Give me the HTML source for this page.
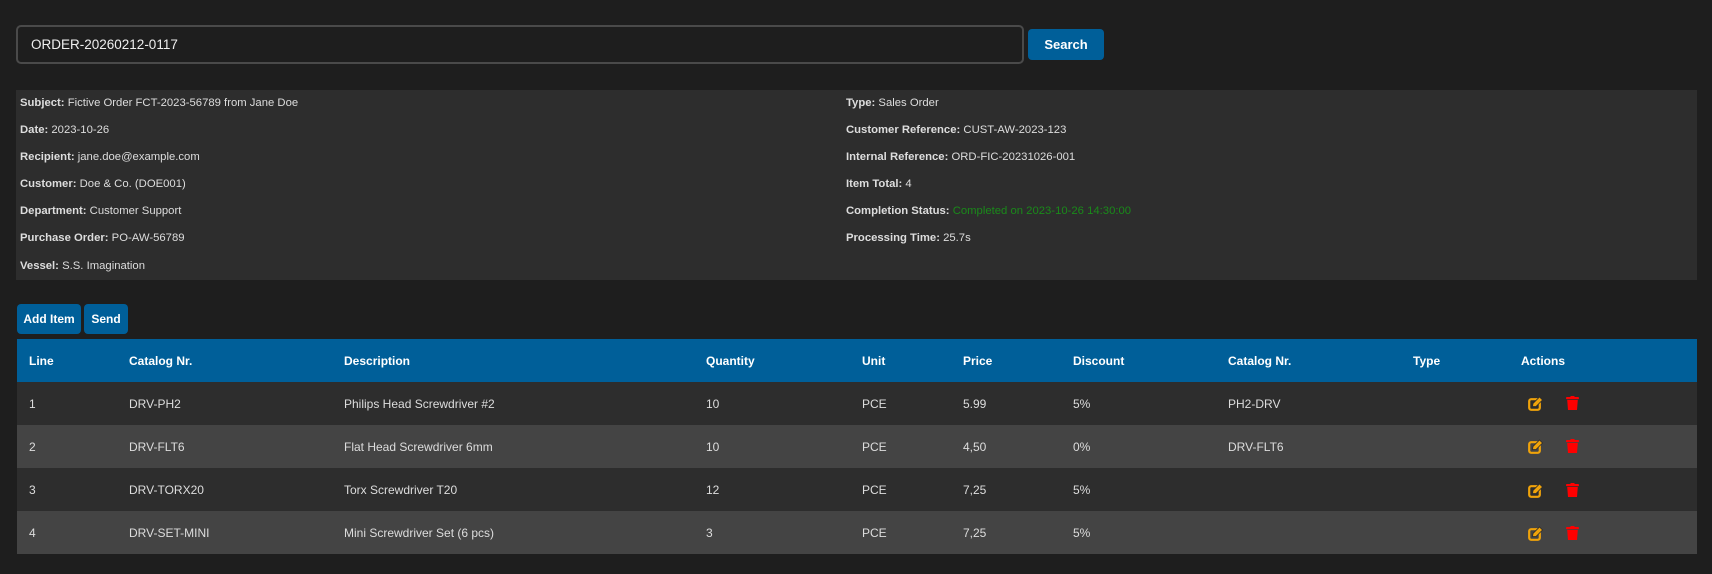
<!DOCTYPE html>
<html><head><meta charset="utf-8"><style>
*{box-sizing:border-box;margin:0;padding:0}
body{width:1712px;height:574px;background:#1e1e1e;font-family:"Liberation Sans",sans-serif;font-size:12px;color:#ddd;position:relative;overflow:hidden}
.abs{position:absolute}
.inp{left:16px;top:25px;width:1008px;height:39px;border:2px solid #4a4a4a;border-radius:5px;background:#1e1e1e;color:#eee;font-size:13.5px;padding:10px 0 0 13px}
.btn{background:#005f99;color:#fff;font-weight:bold;border-radius:4px;text-align:center}
.panel{left:16px;top:90px;width:1681px;height:190px;background:#2d2d2d}
.f{position:absolute;white-space:nowrap;font-size:11.3px;color:#ddd}
.f b{color:#ddd}
table{position:absolute;left:17px;top:339px;width:1680px;border-collapse:collapse;table-layout:fixed}
th{background:#005f99;color:#fff;height:43px;text-align:left;font-size:12px;font-weight:bold;padding:0}
td{height:43px;padding:0;font-size:12px;color:#ddd}
tr.a td{background:#2d2d2d}
tr.b td{background:#444}
</style></head><body>
<div class="abs inp">ORDER-20260212-0117</div>
<div class="abs btn" style="left:1028px;top:29px;width:76px;height:31px;line-height:31px;font-size:13px">Search</div>
<div class="abs panel">
<div class="f" style="left:4px;top:7px"><b>Subject:</b> Fictive Order FCT-2023-56789 from Jane Doe</div>
<div class="f" style="left:4px;top:34px"><b>Date:</b> 2023-10-26</div>
<div class="f" style="left:4px;top:61px"><b>Recipient:</b> jane.doe@example.com</div>
<div class="f" style="left:4px;top:88px"><b>Customer:</b> Doe &amp; Co. (DOE001)</div>
<div class="f" style="left:4px;top:115px"><b>Department:</b> Customer Support</div>
<div class="f" style="left:4px;top:142px"><b>Purchase Order:</b> PO-AW-56789</div>
<div class="f" style="left:4px;top:170px"><b>Vessel:</b> S.S. Imagination</div>
<div class="f" style="left:830px;top:7px"><b>Type:</b> Sales Order</div>
<div class="f" style="left:830px;top:34px"><b>Customer Reference:</b> CUST-AW-2023-123</div>
<div class="f" style="left:830px;top:61px"><b>Internal Reference:</b> ORD-FIC-20231026-001</div>
<div class="f" style="left:830px;top:88px"><b>Item Total:</b> 4</div>
<div class="f" style="left:830px;top:115px"><b>Completion Status:</b> <span style="color:#1a8a1a">Completed on 2023-10-26 14:30:00</span></div>
<div class="f" style="left:830px;top:142px"><b>Processing Time:</b> 25.7s</div>
</div>
<div class="abs btn" style="left:17px;top:304px;width:64px;height:30px;line-height:30px;font-size:12px">Add Item</div>
<div class="abs btn" style="left:84px;top:304px;width:44px;height:30px;line-height:30px;font-size:12px">Send</div>
<table>
<colgroup><col style="width:112px"><col style="width:215px"><col style="width:362px"><col style="width:156px"><col style="width:101px"><col style="width:110px"><col style="width:155px"><col style="width:185px"><col style="width:108px"><col></colgroup>
<tr><th style="padding-left:12px">Line</th><th>Catalog Nr.</th><th>Description</th><th>Quantity</th><th>Unit</th><th>Price</th><th>Discount</th><th>Catalog Nr.</th><th>Type</th><th>Actions</th></tr>
<tr class="a"><td style="padding-left:12px">1</td><td>DRV-PH2</td><td>Philips Head Screwdriver #2</td><td>10</td><td>PCE</td><td>5.99</td><td>5%</td><td>PH2-DRV</td><td></td><td></td></tr>
<tr class="b"><td style="padding-left:12px">2</td><td>DRV-FLT6</td><td>Flat Head Screwdriver 6mm</td><td>10</td><td>PCE</td><td>4,50</td><td>0%</td><td>DRV-FLT6</td><td></td><td></td></tr>
<tr class="a"><td style="padding-left:12px">3</td><td>DRV-TORX20</td><td>Torx Screwdriver T20</td><td>12</td><td>PCE</td><td>7,25</td><td>5%</td><td></td><td></td><td></td></tr>
<tr class="b"><td style="padding-left:12px">4</td><td>DRV-SET-MINI</td><td>Mini Screwdriver Set (6 pcs)</td><td>3</td><td>PCE</td><td>7,25</td><td>5%</td><td></td><td></td><td></td></tr>
</table>
<svg class="abs" style="left:0;top:0" width="1712" height="574">
<defs>
<g id="ed"><rect x="1.2" y="3.2" width="10.6" height="10.6" rx="2" fill="none" stroke="#f0a30a" stroke-width="2.2"/><path d="M4.5 10.5 L5 7.5 L11.5 1 L14.5 4 L8 10.5 Z" fill="#f0a30a" stroke="#2d2d2d" stroke-width="0.8"/></g>
<g id="tr"><rect x="0" y="1" width="13" height="2.2" rx="1" fill="#f00"/><rect x="4.5" y="0" width="4" height="1.5" fill="#f00"/><path d="M1.2 4 H11.8 L11 14 H2 Z" fill="#f00"/></g>
</defs>
<use href="#ed" x="1528" y="396"/><use href="#tr" x="1566" y="396"/>
<use href="#ed" x="1528" y="439"/><use href="#tr" x="1566" y="439"/>
<use href="#ed" x="1528" y="483"/><use href="#tr" x="1566" y="483"/>
<use href="#ed" x="1528" y="526"/><use href="#tr" x="1566" y="526"/>
</svg>
</body></html>
